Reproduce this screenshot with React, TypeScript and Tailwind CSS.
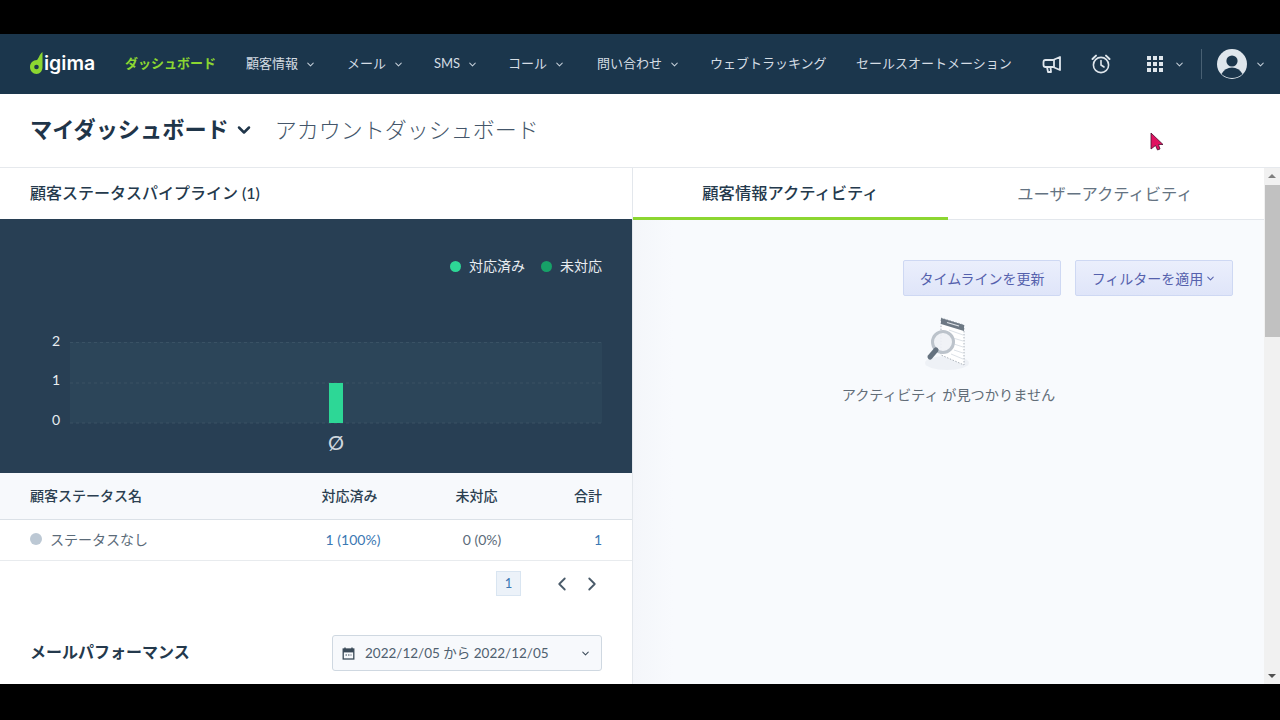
import { ChevronDown, ChevronLeft, ChevronRight } from "lucide-react";

function Chev({ className = "" }: { className?: string }) {
  return <ChevronDown size={11} strokeWidth={2.2} className={className} />;
}

function NavItem({ label, width, active, menu }: { label: string; width: string; active?: boolean; menu?: boolean }) {
  return (
    <div className={`flex items-center shrink-0 ${width}`}>
      <span className={`text-[13px] whitespace-nowrap ${active ? "text-[#8cd631] font-bold" : "text-[#d5dde4]"}`}>{label}</span>
      {menu && <Chev className="ml-[7px] text-[#c3ced8]" />}
    </div>
  );
}

function Logo() {
  return (
    <div className="flex items-center w-[95px] shrink-0">
      <svg width="13" height="22" viewBox="0 0 13 22" className="shrink-0 -mt-[3px]">
        <path d="M12.5 0 C9 3 9 6 7 8 C3 8 0 11 0 15 C0 19 3 22 6.5 22 C10 22 12.5 19 12.5 15 Z" fill="#8cd631" />
        <circle cx="6.5" cy="15" r="2.3" fill="#1b364c" />
      </svg>
      <span className="text-[19.5px] leading-none font-semibold text-white font-['Inter',sans-serif] ml-[1px]">igima</span>
    </div>
  );
}

function MagnifierArt() {
  return (
    <svg width="56" height="60" viewBox="0 0 56 60">
      <ellipse cx="26" cy="47" rx="22" ry="7" fill="#eef1f6" />
      <path d="M20 2 L43 9 L43 49 L20 39 Z" fill="#ffffff" stroke="#aab1ba" strokeDasharray="1.5 1.5" />
      <path d="M20 2 L43 9 L43 15 L20 8 Z" fill="#6d7884" />
      <path d="M26 6.5 L38 10" stroke="#dfe3e8" strokeWidth="1.2" />
      <path d="M28 14 L42 19 M32 22 L42 25 M33 28 L42 31 M33 34 L42 37 M30 38 L42 43" stroke="#dde2e8" />
      <circle cx="22" cy="26" r="10.5" fill="#eef1f5" fillOpacity="0.9" stroke="#bcc3cb" strokeWidth="3" />
      <path d="M15 34 L9 41" stroke="#65727f" strokeWidth="5" strokeLinecap="round" />
    </svg>
  );
}

const cols = "grid-cols-[262px_115px_139px_56px]";

export default function App() {
  return (
    <div className="relative w-[1280px] h-[720px] bg-black flex flex-col pt-[34px] pb-[36px] overflow-hidden font-['Lato','Noto_Sans_CJK_JP',sans-serif]">
      <nav className="h-[60px] shrink-0 bg-[#1b364c] flex items-center pl-[30px]">
        <Logo />
        <NavItem label="ダッシュボード" width="w-[121px]" active />
        <NavItem label="顧客情報" width="w-[101px]" menu />
        <NavItem label="メール" width="w-[87px]" menu />
        <NavItem label="SMS" width="w-[74px]" menu />
        <NavItem label="コール" width="w-[89px]" menu />
        <NavItem label="問い合わせ" width="w-[113px]" menu />
        <NavItem label="ウェブトラッキング" width="w-[146px]" />
        <NavItem label="セールスオートメーション" width="w-[186px]" />
        <svg width="20" height="20" viewBox="0 0 20 20" fill="none" stroke="#dfe6ec" strokeWidth="1.8" strokeLinejoin="round" className="shrink-0">
          <path d="M18 3 L18 16 L11 13 L3.5 13 Q1.5 13 1.5 11 L1.5 8 Q1.5 6 3.5 6 L11 6 Z" />
          <path d="M12 6 L12 13" />
          <path d="M5 13 L6 18 L9 18 L8.5 13" />
        </svg>
        <svg width="20" height="20" viewBox="0 0 20 20" fill="none" stroke="#dfe6ec" strokeWidth="1.6" strokeLinecap="round" className="ml-[29px] shrink-0">
          <circle cx="10" cy="11" r="7.6" />
          <path d="M10 6.5 L10 11 L13 13" />
          <path d="M1.5 5 L5 1.6 M18.5 5 L15 1.6" strokeWidth="2" />
        </svg>
        <div className="ml-[36px] grid grid-cols-3 gap-[2px] w-[16px] shrink-0">
          {[0, 1, 2, 3, 4, 5, 6, 7, 8].map((i) => (
            <div key={i} className="w-[4px] h-[4px] bg-[#dfe6ec]" />
          ))}
        </div>
        <Chev className="ml-[11px] text-[#c3ced8]" />
        <div className="ml-[16px] w-px h-[30px] bg-[#486073]" />
        <svg width="30" height="30" viewBox="0 0 30 30" className="ml-[15px] shrink-0">
          <circle cx="15" cy="15" r="15" fill="#dfe6ec" />
          <circle cx="15" cy="12" r="5.6" fill="#1b364c" />
          <path d="M4.5 25 Q8 18.5 15 18.5 Q22 18.5 25.5 25 Q21 29 15 29 Q9 29 4.5 25 Z" fill="#1b364c" />
        </svg>
        <Chev className="ml-[8px] text-[#c3ced8]" />
      </nav>

      <header className="h-[74px] shrink-0 bg-white border-b border-[#e6e9ed] flex items-center pl-[30px] pb-[2px]">
        <span className="text-[22.2px] font-bold text-[#1f3549]">マイダッシュボード</span>
        <ChevronDown size={20} strokeWidth={3} className="ml-[5px] text-[#1f3549]" />
        <span className="ml-[21px] text-[22px] font-light text-[#44566a]">アカウントダッシュボード</span>
      </header>

      <main className="flex-1 min-h-0 flex bg-white">
        <section className="w-[632px] shrink-0 flex flex-col">
          <div className="h-[51px] shrink-0 flex items-center pl-[30px] pb-[2px] text-[16px] font-medium text-[#24394c]">
            顧客ステータスパイプライン (1)
          </div>
          <div className="h-[254px] shrink-0 bg-[#283f54]">
            <div className="flex justify-end items-center pt-[36px] pr-[30px] text-[14px] leading-[22px] text-[#e8edf1]">
              <span className="w-[11px] h-[11px] rounded-full bg-[#2dd796]" />
              <span className="ml-[8px]">対応済み</span>
              <span className="ml-[16px] w-[11px] h-[11px] rounded-full bg-[#17a168]" />
              <span className="ml-[8px]">未対応</span>
            </div>
            <svg width="632" height="196" viewBox="0 0 632 196" className="block">
              <rect x="70" y="65" width="532" height="81" fill="#2c4559" />
              <path d="M70 65.5H602 M70 106H602 M70 146H602" stroke="#3a5265" strokeDasharray="3 3" />
              <rect x="329" y="106" width="14" height="40" fill="#2dd796" />
              <text x="60" y="69" textAnchor="end" fontSize="14" fill="#e8edf1">2</text>
              <text x="60" y="108" textAnchor="end" fontSize="14" fill="#e8edf1">1</text>
              <text x="60" y="148" textAnchor="end" fontSize="14" fill="#e8edf1">0</text>
              <text x="336" y="173" textAnchor="middle" fontSize="20" fill="#cfd7de">Ø</text>
            </svg>
          </div>
          <div className={`h-[47px] shrink-0 bg-[#f7f9fc] border-b border-[#dbe1e7] grid ${cols} items-center pl-[30px] pr-[30px] pb-[2px] text-[14px] font-medium text-[#2b3f51]`}>
            <span>顧客ステータス名</span>
            <span className="text-center">対応済み</span>
            <span className="text-center">未対応</span>
            <span className="text-right">合計</span>
          </div>
          <div className={`h-[41px] shrink-0 border-b border-[#e8ebee] grid ${cols} items-center pl-[30px] pr-[30px] pb-[2px] text-[14px] text-[#5b6b79]`}>
            <span className="flex items-center">
              <span className="w-[12px] h-[12px] rounded-full bg-[#bcc8d4]" />
              <span className="ml-[8px]">ステータスなし</span>
            </span>
            <span className="text-center text-[#3b78b3] pl-[7px]">1 (100%)</span>
            <span className="text-center pl-[11px]">0 (0%)</span>
            <span className="text-right text-[#3b78b3]">1</span>
          </div>
          <div className="h-[46px] shrink-0 flex items-center justify-end pr-[29px] pb-[1px] text-[#4a5b6a]">
            <span className="w-[25px] h-[25px] flex items-center justify-center bg-[#ecf2f9] border border-[#d9e5f1] text-[13px] text-[#3b78b3]">1</span>
            <ChevronLeft size={22} strokeWidth={2} className="ml-[30px]" />
            <ChevronRight size={22} strokeWidth={2} className="ml-[8px]" />
          </div>
          <div className="flex items-center justify-between pl-[30px] pr-[30px] pt-[28px]">
            <span className="mb-[2px] text-[16px] font-bold text-[#24394c]">メールパフォーマンス</span>
            <div className="w-[270px] h-[36px] flex items-center bg-[#f7f9fc] border border-[#cfd8e1] rounded-[3px] pl-[9px] pr-[10px] text-[13.5px] text-[#4f606f]">
              <svg width="13" height="13" viewBox="0 0 13 13" className="shrink-0">
                <path d="M3 0.5 V2 M10 0.5 V2" stroke="#3a4a58" strokeWidth="1.4" />
                <rect x="1.2" y="2" width="10.6" height="10" fill="none" stroke="#3a4a58" strokeWidth="1.3" />
                <rect x="1.2" y="2" width="10.6" height="3.4" fill="#3a4a58" />
                <path d="M3.5 8 H9.5" stroke="#3a4a58" strokeWidth="1" strokeDasharray="1.5 1" />
              </svg>
              <span className="ml-[10px] flex-1 whitespace-nowrap">2022/12/05 から 2022/12/05</span>
              <Chev className="text-[#3a4a58]" />
            </div>
          </div>
        </section>

        <section className="w-[632px] shrink-0 flex flex-col bg-[linear-gradient(90deg,#f4f6fa,#f8fafd_40px)] border-l border-[#e3e7ec]">
          <div className="h-[52px] shrink-0 flex bg-white text-[16.3px]">
            <div className="w-[315px] flex items-center justify-center pt-[2px] font-medium text-[#24394c] border-b-[3px] border-[#8cd631]">顧客情報アクティビティ</div>
            <div className="flex-1 flex items-center justify-center pr-[2px] pt-[1px] text-[#647382] border-b border-[#e3e7ec]">ユーザーアクティビティ</div>
          </div>
          <div className="flex justify-end gap-[14px] pt-[40px] pr-[31px]">
            <div className="h-[36px] w-[158px] flex items-center justify-center rounded-[2px] border border-[#ced8f3] bg-gradient-to-b from-[#ebeffc] to-[#dfe5f9] text-[14px] text-[#5561ad]">タイムラインを更新</div>
            <div className="h-[36px] w-[158px] flex items-center justify-center rounded-[2px] border border-[#ced8f3] bg-gradient-to-b from-[#ebeffc] to-[#dfe5f9] text-[14px] text-[#5561ad]">
              フィルターを適用
              <Chev className="text-[#5561ad] ml-[2px]" />
            </div>
          </div>
          <div className="flex flex-col items-center mt-[20px]">
            <MagnifierArt />
            <span className="mt-[8px] text-[14.2px] text-[#626d78]">アクティビティ が見つかりません</span>
          </div>
        </section>

        <aside className="w-[16px] shrink-0 bg-[#f1f1f1] flex flex-col items-center">
          <div className="mt-[6px] w-0 h-0 border-x-[4px] border-x-transparent border-b-[4px] border-b-[#7f7f7f]" />
          <div className="mt-[7px] w-[15px] h-[152px] bg-[#c1c1c1] ml-[1px]" />
          <div className="mt-auto mb-[6px] w-0 h-0 border-x-[4px] border-x-transparent border-t-[4px] border-t-[#505050]" />
        </aside>
      </main>

      <svg width="14" height="20" viewBox="0 0 14 20" className="absolute left-[1150px] top-[132px]">
        <path d="M1 1 L13 12.5 L8.5 12.5 L10 17 L7.5 18 L5.5 13.5 L1 17 Z" fill="#e0115f" stroke="#4a1030" strokeWidth="0.8" />
      </svg>
    </div>
  );
}
